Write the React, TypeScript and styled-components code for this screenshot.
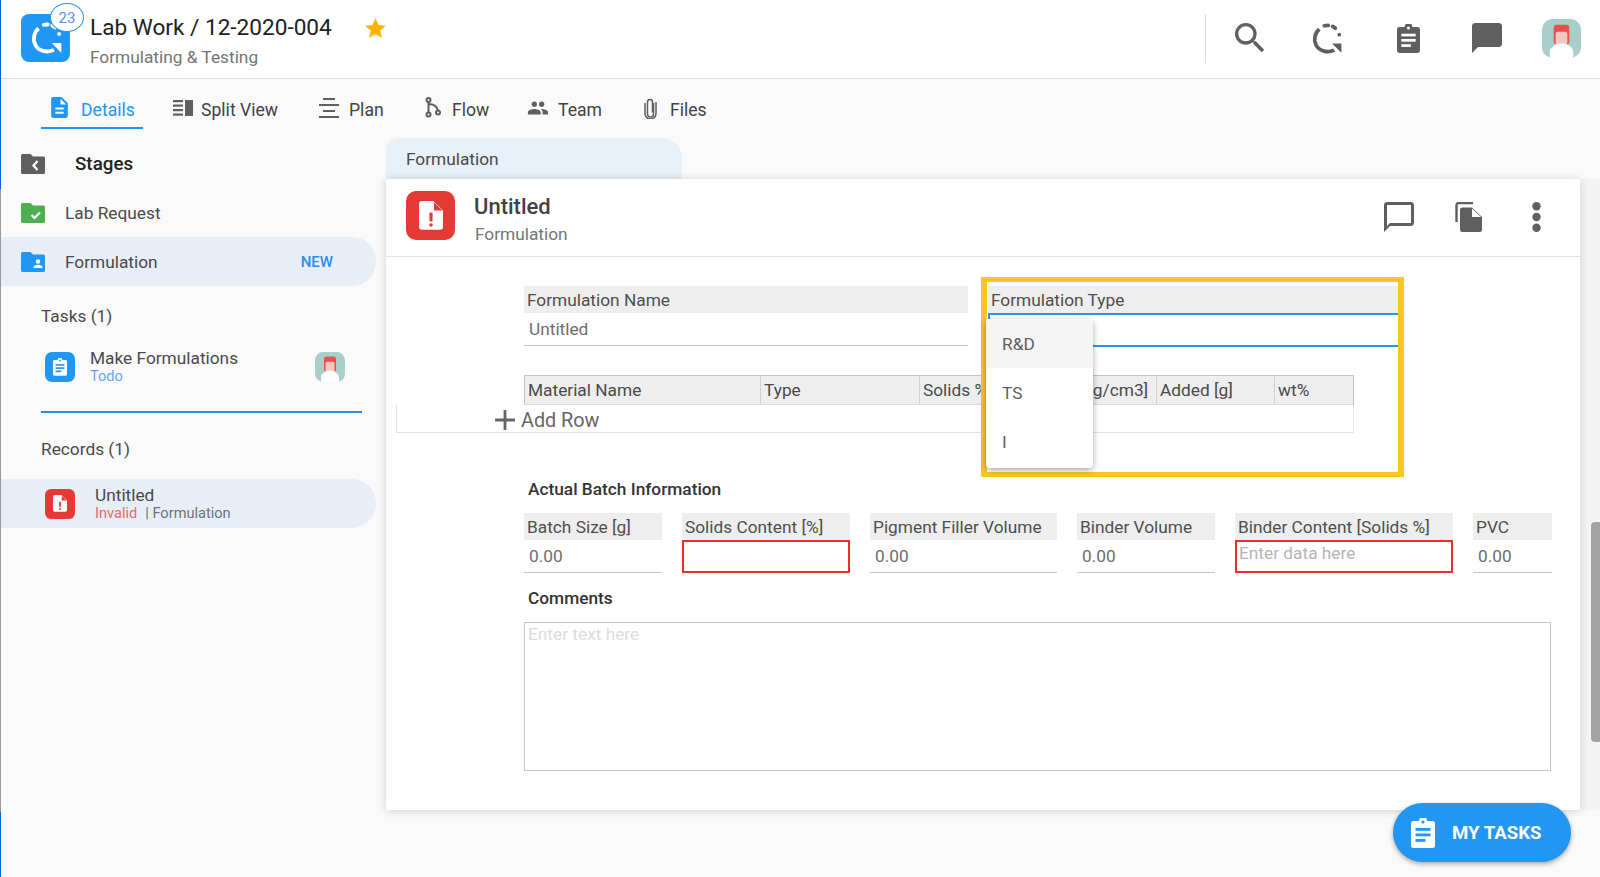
import React from "react";
import styled, { createGlobalStyle } from "styled-components";
import { MdSearch, MdChatBubble, MdChatBubbleOutline, MdPeople, MdDescription, MdStar, MdAdd } from "react-icons/md";

const Global = createGlobalStyle`
  html, body { margin: 0; padding: 0; height: 100%; overflow: hidden; }
  body { font-family: Roboto, "Liberation Sans", sans-serif; background: #fafafa; color: #424242; }
  * { box-sizing: border-box; }
`;

const Page = styled.div`
  position: relative;
  width: 1600px;
  height: 877px;
  overflow: hidden;
  background: #fafafa;
  border-left: 1px solid #999;
  border-image: linear-gradient(to bottom, #0a63d0 0, #0a63d0 190px, #999 190px, #999 811px, #0a63d0 811px) 1;
`;

const TopBar = styled.header`
  height: 79px;
  background: #fff;
  border-bottom: 1px solid #ddd;
  display: flex;
  align-items: center;
  padding: 0 19px 2px 20px;
`;
const LogoBox = styled.div`
  position: relative;
  width: 49px;
  height: 48px;
  border-radius: 8px;
  background: #2196f3;
  display: flex;
  align-items: center;
  justify-content: center;
  flex: none;
`;
const Badge = styled.span`
  position: absolute;
  left: 29px;
  top: -11px;
  width: 34px;
  height: 29px;
  border-radius: 50%;
  background: #fff;
  border: 1px solid #2196f3;
  color: #5b8ff0;
  font-size: 15px;
  display: flex;
  align-items: center;
  justify-content: center;
`;
const TitleBlock = styled.div`
  margin: 6px 0 0 20px;
  width: 273px;
  display: flex;
  flex-direction: column;
  gap: 2px;
`;
const AppTitle = styled.div`
  font-size: 22.6px;
  line-height: 30px;
  color: #212121;
  white-space: nowrap;
`;
const AppSub = styled.div`
  font-size: 17.3px;
  line-height: 24px;
  color: #757575;
`;
const Star = styled.div`
  color: #ffb300;
  display: flex;
  margin-top: -20px;
`;
const Spacer = styled.div`
  flex: 1;
`;
const Divider = styled.div`
  width: 1px;
  height: 49px;
  background: #ddd;
  margin-right: 24px;
`;
const TopIcons = styled.div`
  display: flex;
  align-items: center;
  gap: 39px;
  color: #5f5f5f;
`;
const IconSlot = styled.div`
  width: 40px;
  display: flex;
  justify-content: center;
  align-items: center;
  flex: none;
`;
const LoopSlot = styled(IconSlot)`
  justify-content: flex-start;
  padding-left: 1px;
`;
const AvatarSlot = styled.div`
  margin-left: -4px;
  display: flex;
`;

const TabBar = styled.nav`
  height: 59px;
  display: flex;
  align-items: flex-start;
  padding-left: 40px;
`;
const Tab = styled.div<{ $active?: boolean; $w: number; $pad: number; $gap: number }>`
  width: ${(p) => p.$w}px;
  height: 50px;
  display: flex;
  align-items: center;
  gap: ${(p) => p.$gap}px;
  padding: 14px 0 0 ${(p) => p.$pad}px;
  font-size: 17.6px;
  white-space: nowrap;
  color: ${(p) => (p.$active ? "#2196f3" : "#424242")};
  border-bottom: 2px solid ${(p) => (p.$active ? "#2196f3" : "transparent")};
  svg { color: ${(p) => (p.$active ? "#2196f3" : "#5f5f5f")}; flex: none; margin-top: -5px; }
`;

const Body = styled.div`
  display: flex;
`;
const Sidebar = styled.aside`
  width: 385px;
  flex: none;
  padding-right: 10px;
`;
const StageHead = styled.div`
  height: 50px;
  display: flex;
  align-items: center;
  padding: 1px 0 0 20px;
  gap: 30px;
  font-size: 18.8px;
  font-weight: 500;
  color: #212121;
`;
const StageRow = styled.div<{ $active?: boolean }>`
  height: 49px;
  display: flex;
  align-items: center;
  padding: 0 43px 0 20px;
  gap: 20px;
  font-size: 17.3px;
  color: #4a4a4a;
  background: ${(p) => (p.$active ? "#e8eef6" : "transparent")};
  border-radius: 0 24px 24px 0;
`;
const NewTag = styled.span`
  margin-left: auto;
  font-size: 15px;
  font-weight: 500;
  color: #2f8df0;
`;
const GroupTitle = styled.div<{ $top: number }>`
  margin: ${(p) => p.$top}px 0 0 40px;
  font-size: 17.3px;
  line-height: 24px;
  color: #4a4a4a;
`;
const TaskRow = styled.div`
  display: flex;
  align-items: center;
  margin: 20px 31px 0 44px;
  gap: 15px;
`;
const TwoLines = styled.div`
  flex: 1;
  display: flex;
  flex-direction: column;
`;
const LineMain = styled.div`
  font-size: 17.3px;
  line-height: 20px;
  color: #4a4a4a;
`;
const LineSub = styled.div`
  font-size: 14.6px;
  line-height: 17px;
  color: #6b7280;
`;
const TodoText = styled.span`
  color: #64a6ff;
`;
const InvalidText = styled.span`
  color: #ea6a6a;
  margin-right: 8px;
`;
const BlueRule = styled.div`
  height: 2px;
  margin: 26px 14px 0 40px;
  background: #2d88e8;
`;
const RecordRow = styled.div`
  height: 49px;
  margin-top: 18px;
  display: flex;
  align-items: center;
  padding-left: 44px;
  gap: 20px;
  background: #e8eef6;
  border-radius: 0 24px 24px 0;
`;
const SquareIcon = styled.div<{ $bg: string; $size: number; $r: number }>`
  width: ${(p) => p.$size}px;
  height: ${(p) => p.$size}px;
  border-radius: ${(p) => p.$r}px;
  background: ${(p) => p.$bg};
  display: flex;
  align-items: center;
  justify-content: center;
  flex: none;
`;

const Main = styled.main`
  width: 1194px;
  flex: none;
`;
const SheetTab = styled.div`
  width: 296px;
  height: 41px;
  padding: 0 20px;
  display: flex;
  align-items: center;
  background: #e8f0f8;
  border-radius: 12px 20px 0 0;
  font-size: 17.3px;
  color: #4a4a4a;
`;
const Card = styled.section`
  height: 631px;
  background: #fff;
  border-radius: 2px;
  box-shadow: 0 1px 10px rgba(0, 0, 0, 0.18);
  position: relative;
  z-index: 1;
`;
const CardHead = styled.div`
  height: 78px;
  border-bottom: 1px solid #e2e2e2;
  display: flex;
  align-items: center;
  padding: 0 37px 4px 20px;
  color: #5f5f5f;
`;
const CardTitles = styled.div`
  margin: 6px 0 0 19px;
  flex: 1;
  display: flex;
  flex-direction: column;
`;
const CardTitle = styled.div`
  font-size: 22px;
  line-height: 30px;
  font-weight: 500;
  color: #424242;
`;
const CardSub = styled.div`
  font-size: 17.3px;
  line-height: 24px;
  color: #757575;
  margin-left: 1px;
`;
const CardTools = styled.div`
  display: flex;
  align-items: center;
  gap: 38px;
  margin-top: 3px;
`;
const DotsSlot = styled.div`
  margin-left: 10px;
  display: flex;
`;

const Form = styled.div`
  position: relative;
  padding: 29px 29px 0 138px;
`;
const FieldRow = styled.div<{ $gap: number; $top: number }>`
  display: flex;
  gap: ${(p) => p.$gap}px;
  margin-top: ${(p) => p.$top}px;
`;
const Field = styled.div<{ $w: number }>`
  position: relative;
  width: ${(p) => p.$w}px;
  flex: none;
`;
const FieldLabel = styled.div`
  height: 27px;
  background: #eee;
  padding: 0 3px;
  display: flex;
  align-items: center;
  font-size: 17.3px;
  color: #4f4f4f;
  white-space: nowrap;
`;
const FieldValue = styled.div<{ $state?: "error" | "focus" }>`
  height: 33px;
  padding: 0 5px;
  display: flex;
  align-items: center;
  font-size: 17.3px;
  color: #6e6e6e;
  border-bottom: 1px solid #c6c6c6;
  ${(p) => p.$state === "error" && `border: 2px solid #f02b2b; align-items: flex-start; padding: 1px 2px; color: #b5b5b5;`}
  ${(p) => p.$state === "focus" && `border: 2px solid #2196f3; border-right: 0; height: 34px;`}
`;
const Highlight = styled.div`
  position: absolute;
  left: 595px;
  top: 20px;
  width: 423px;
  height: 200px;
  border: 5px solid #fcc425;
  border-left-width: 6px;
  border-right-width: 6px;
  pointer-events: none;
`;
const Menu = styled.div`
  position: absolute;
  left: -2px;
  top: 33px;
  width: 107px;
  padding-bottom: 2px;
  background: #fff;
  border-radius: 4px;
  box-shadow: 0 2px 6px rgba(0, 0, 0, 0.35);
  z-index: 2;
`;
const MenuItem = styled.div<{ $hover?: boolean }>`
  height: 49px;
  padding-left: 16px;
  display: flex;
  align-items: center;
  font-size: 17.3px;
  color: #5f5f5f;
  background: ${(p) => (p.$hover ? "#f5f5f5" : "transparent")};
`;
const TableHead = styled.div`
  display: flex;
  margin-top: 28px;
  width: 830px;
  border: 1px solid #c4c4c4;
  border-bottom: 1px solid #d8d8d8;
  background: #eee;
`;
const HeadCell = styled.div<{ $w: number }>`
  width: ${(p) => p.$w}px;
  height: 28px;
  flex: none;
  padding: 0 3px;
  display: flex;
  align-items: center;
  font-size: 17.3px;
  color: #4a4a4a;
  white-space: nowrap;
  overflow: hidden;
  border-right: 1px solid #d0d0d0;
  &:last-child { border-right: 0; }
`;
const AddRow = styled.div`
  margin-left: -128px;
  width: 958px;
  height: 28px;
  border: 1px solid #e2e2e2;
  border-top: 0;
  padding: 3px 0 0 91px;
  display: flex;
  align-items: center;
  font-size: 19.8px;
  color: #666;
  svg { flex: none; margin-right: -1px; }
`;
const SectionTitle = styled.div<{ $top: number }>`
  margin: ${(p) => p.$top}px 0 0 4px;
  font-size: 17.3px;
  line-height: 20px;
  font-weight: 500;
  color: #333;
`;
const NoteBox = styled.div`
  margin-top: 14px;
  width: 1027px;
  height: 149px;
  border: 1px solid #c6c6c6;
  padding: 1px 3px;
  font-size: 17.3px;
  color: #dcdcdc;
`;
const Thumb = styled.div`
  position: absolute;
  right: 0;
  top: 522px;
  width: 9px;
  height: 220px;
  border-radius: 4px 0 0 4px;
  background: #a3a3a3;
`;
const Track = styled.div`
  position: absolute;
  right: 0;
  top: 179px;
  height: 631px;
  width: 19px;
  background: #f4f4f4;
`;
const Fab = styled.button`
  position: absolute;
  left: 1392px;
  top: 803px;
  width: 178px;
  height: 59px;
  border: 0;
  border-radius: 30px;
  background: #2196f3;
  color: #fff;
  font-family: inherit;
  font-size: 18.6px;
  font-weight: 700;
  display: flex;
  align-items: center;
  gap: 17px;
  padding: 0 0 0 18px;
  z-index: 3;
  box-shadow: 0 2px 5px rgba(0, 0, 0, 0.35);
`;

const LoopIcon = ({ size, color }: { size: number; color: string }) => (
  <svg width={size} height={size} viewBox="0 0 30 30" fill="none" stroke={color} strokeWidth="3.4">
    <path d="M8.5 6.5A12 12 0 0 0 5.5 21C8.5 26.5 16 28.5 22 25.5" />
    <path d="M13 3.4l3.6-.3M20.6 4l2.4 1.6" strokeLinecap="round" />
    <circle cx="26.6" cy="11.5" r="1.7" fill={color} stroke="none" />
    <path d="M20 19.5h8.5V28z" fill={color} stroke="none" />
  </svg>
);

const ClipboardIcon = ({ w, h, color, bars }: { w: number; h: number; color: string; bars: string }) => (
  <svg width={w} height={h} viewBox="0 0 24 30">
    <path d="M2.5 3H8a4 4 0 0 1 8 0h5.5A2.5 2.5 0 0 1 24 5.5v22a2.5 2.5 0 0 1-2.5 2.5h-19A2.5 2.5 0 0 1 0 27.5v-22A2.5 2.5 0 0 1 2.5 3z" fill={color} />
    <circle cx="12" cy="4" r="1.6" fill={bars} />
    <rect x="4.5" y="10" width="15" height="2.8" fill={bars} />
    <rect x="4.5" y="15.5" width="15" height="2.8" fill={bars} />
    <rect x="4.5" y="21" width="10" height="2.8" fill={bars} />
  </svg>
);

const FolderBase = ({ color, children }: { color: string; children: React.ReactNode }) => (
  <svg width="24" height="20" viewBox="0 0 24 20" fill={color}>
    <path d="M1.5 0h8l2.5 2.5h10.5A1.5 1.5 0 0 1 24 4v14.5a1.5 1.5 0 0 1-1.5 1.5h-21A1.5 1.5 0 0 1 0 18.5v-17A1.5 1.5 0 0 1 1.5 0z" />
    {children}
  </svg>
);

const FileAlert = ({ size, color }: { size: number; color: string }) => (
  <svg width={size} height={size * 1.2} viewBox="0 0 20 24">
    <path d="M2.5 0H12l8 8v13.5A2.5 2.5 0 0 1 17.5 24h-15A2.5 2.5 0 0 1 0 21.5v-19A2.5 2.5 0 0 1 2.5 0z" fill="#fff" />
    <path d="M12.5 1v7h7z" fill={color} />
    <rect x="8.7" y="9.5" width="2.6" height="7.5" rx="1" fill={color} />
    <circle cx="10" cy="20" r="1.5" fill={color} />
  </svg>
);

const Avatar = ({ size, id }: { size: number; id: string }) => (
  <svg width={size} height={size} viewBox="0 0 40 40">
    <defs>
      <clipPath id={id}>
        <rect width="40" height="40" rx="11" />
      </clipPath>
    </defs>
    <g clipPath={`url(#${id})`}>
      <rect width="40" height="40" fill="#a9cfcb" />
      <rect x="12" y="6" width="16" height="20" rx="3" fill="#e9504c" />
      <rect x="14" y="13" width="12" height="13" rx="2" fill="#f3c6c0" />
      <path d="M8 40v-7c0-4 5-6 8-8h8c3 2 8 4 8 8v7z" fill="#fff" />
    </g>
  </svg>
);

const SplitIcon = () => (
  <svg width="20" height="16" viewBox="0 0 20 16" fill="#5f5f5f">
    <rect x="0" y="0" width="10" height="2.2" />
    <rect x="0" y="4.5" width="10" height="2.2" />
    <rect x="0" y="9" width="10" height="2.2" />
    <rect x="0" y="13.5" width="10" height="2.2" />
    <rect x="12" y="0" width="8" height="16" />
  </svg>
);
const PlanIcon = () => (
  <svg width="20" height="20" viewBox="0 0 20 20" fill="#5f5f5f">
    <rect x="4" y="0" width="12" height="2" />
    <rect x="0" y="6" width="20" height="2" />
    <rect x="4" y="12" width="12" height="2" />
    <rect x="0" y="18" width="20" height="2" />
  </svg>
);
const FlowIcon = () => (
  <svg width="16" height="21" viewBox="0 0 16 21" fill="none" stroke="#5f5f5f" strokeWidth="2">
    <circle cx="3.5" cy="3" r="2" />
    <circle cx="3.5" cy="17.5" r="2" />
    <circle cx="13" cy="15.5" r="2" />
    <path d="M3.5 5v10.5M3.5 7c4 0 8 1 9.5 6.5" />
  </svg>
);
const ClipIcon = () => (
  <svg width="13" height="22" viewBox="0 0 13 22" fill="none" stroke="#5f5f5f" strokeWidth="1.5">
    <path d="M9.5 5v11a3 3 0 0 1-6 0V4a2.5 2.5 0 0 1 5 0v10.5" transform="translate(0 1)" />
    <path d="M1 6v10.5a5.5 5.5 0 0 0 11 0V5" />
  </svg>
);
const CopyIcon = () => (
  <svg width="27" height="30" viewBox="0 0 27 30" fill="#5f5f5f">
    <path d="M1.5 20V3a2 2 0 0 1 2-2h14.5" fill="none" stroke="#5f5f5f" strokeWidth="2.4" />
    <path d="M7.5 5.5H17L27 15v12.5a2.5 2.5 0 0 1-2.5 2.5h-17A2.5 2.5 0 0 1 5 27.5V8a2.5 2.5 0 0 1 2.5-2.5z" />
    <path d="M17 6.5V15h9z" fill="#fff" />
  </svg>
);
const DotsIcon = () => (
  <svg width="13" height="30" viewBox="0 0 13 30" fill="#5f5f5f">
    <circle cx="6.5" cy="4.3" r="4.2" />
    <circle cx="6.5" cy="15" r="4.2" />
    <circle cx="6.5" cy="25.7" r="4.2" />
  </svg>
);

const batch: { label: string; w: number; value?: string; state?: "error"; placeholder?: string }[] = [
  { label: "Batch Size [g]", w: 138, value: "0.00" },
  { label: "Solids Content [%]", w: 168, state: "error" },
  { label: "Pigment Filler Volume", w: 187, value: "0.00" },
  { label: "Binder Volume", w: 138, value: "0.00" },
  { label: "Binder Content [Solids %]", w: 218, state: "error", placeholder: "Enter data here" },
  { label: "PVC", w: 79, value: "0.00" },
];

const columns = [
  { label: "Material Name", w: 236 },
  { label: "Type", w: 159 },
  { label: "Solids %", w: 104 },
  { label: "Density [g/cm3]", w: 133 },
  { label: "Added [g]", w: 118 },
  { label: "wt%", w: 78 },
];

export default function App() {
  return (
    <>
      <Global />
      <Page>
        <TopBar>
          <LogoBox>
            <LoopIcon size={34} color="#fff" />
            <Badge>23</Badge>
          </LogoBox>
          <TitleBlock>
            <AppTitle>Lab Work / 12-2020-004</AppTitle>
            <AppSub>Formulating &amp; Testing</AppSub>
          </TitleBlock>
          <Star>
            <MdStar size={25} />
          </Star>
          <Spacer />
          <Divider />
          <TopIcons>
            <IconSlot><MdSearch size={40} /></IconSlot>
            <LoopSlot><LoopIcon size={33} color="#5f5f5f" /></LoopSlot>
            <IconSlot><ClipboardIcon w={23} h={29} color="#5f5f5f" bars="#fff" /></IconSlot>
            <IconSlot><MdChatBubble size={36} /></IconSlot>
            <AvatarSlot><Avatar size={39} id="avatarTop" /></AvatarSlot>
          </TopIcons>
        </TopBar>
        <TabBar>
          <Tab $active $w={102} $pad={6} $gap={9}><MdDescription size={25} />Details</Tab>
          <Tab $w={136} $pad={30} $gap={8}><SplitIcon />Split View</Tab>
          <Tab $w={110} $pad={40} $gap={10}><PlanIcon />Plan</Tab>
          <Tab $w={100} $pad={36} $gap={11}><FlowIcon />Flow</Tab>
          <Tab $w={112} $pad={38} $gap={9}><MdPeople size={22} />Team</Tab>
          <Tab $w={100} $pad={43} $gap={13}><ClipIcon />Files</Tab>
        </TabBar>
        <Body>
          <Sidebar>
            <StageHead>
              <FolderBase color="#5f5f5f">
                <path d="M16.5 7l-4 4.5 4 4.5" fill="none" stroke="#fff" strokeWidth="2.4" />
              </FolderBase>
              Stages
            </StageHead>
            <StageRow>
              <FolderBase color="#4caf50">
                <path d="M10.5 12l3 3 5.5-5.5" fill="none" stroke="#fff" strokeWidth="2.2" />
              </FolderBase>
              Lab Request
            </StageRow>
            <StageRow $active>
              <FolderBase color="#2196f3">
                <circle cx="17" cy="9.5" r="2.2" fill="#fff" />
                <path d="M12.5 16c0-2.5 2.5-3.2 4.5-3.2s4.5.7 4.5 3.2z" fill="#fff" />
              </FolderBase>
              Formulation
              <NewTag>NEW</NewTag>
            </StageRow>
            <GroupTitle $top={18}>Tasks (1)</GroupTitle>
            <TaskRow>
              <SquareIcon $bg="#2196f3" $size={30} $r={7}>
                <ClipboardIcon w={14} h={18} color="#fff" bars="#2196f3" />
              </SquareIcon>
              <TwoLines>
                <LineMain>Make Formulations</LineMain>
                <LineSub><TodoText>Todo</TodoText></LineSub>
              </TwoLines>
              <Avatar size={30} id="avatarTask" />
            </TaskRow>
            <BlueRule />
            <GroupTitle $top={24}>Records (1)</GroupTitle>
            <RecordRow>
              <SquareIcon $bg="#e53935" $size={30} $r={6}>
                <FileAlert size={14} color="#e53935" />
              </SquareIcon>
              <TwoLines>
                <LineMain>Untitled</LineMain>
                <LineSub><InvalidText>Invalid</InvalidText>| Formulation</LineSub>
              </TwoLines>
            </RecordRow>
          </Sidebar>
          <Main>
            <SheetTab>Formulation</SheetTab>
            <Card>
              <CardHead>
                <SquareIcon $bg="#e53935" $size={49} $r={10}>
                  <FileAlert size={24} color="#e53935" />
                </SquareIcon>
                <CardTitles>
                  <CardTitle>Untitled</CardTitle>
                  <CardSub>Formulation</CardSub>
                </CardTitles>
                <CardTools>
                  <MdChatBubbleOutline size={36} />
                  <CopyIcon />
                  <DotsSlot><DotsIcon /></DotsSlot>
                </CardTools>
              </CardHead>
              <Form>
                <FieldRow $gap={20} $top={0}>
                  <Field $w={444}>
                    <FieldLabel>Formulation Name</FieldLabel>
                    <FieldValue>Untitled</FieldValue>
                  </Field>
                  <Field $w={411}>
                    <FieldLabel>Formulation Type</FieldLabel>
                    <FieldValue $state="focus" />
                    <Menu>
                      <MenuItem $hover>R&amp;D</MenuItem>
                      <MenuItem>TS</MenuItem>
                      <MenuItem>I</MenuItem>
                    </Menu>
                  </Field>
                </FieldRow>
                <TableHead>
                  {columns.map((c) => (
                    <HeadCell key={c.label} $w={c.w}>{c.label}</HeadCell>
                  ))}
                </TableHead>
                <AddRow>
                  <MdAdd size={34} />
                  Add Row
                </AddRow>
                <SectionTitle $top={46}>Actual Batch Information</SectionTitle>
                <FieldRow $gap={20} $top={14}>
                  {batch.map((f) => (
                    <Field key={f.label} $w={f.w}>
                      <FieldLabel>{f.label}</FieldLabel>
                      <FieldValue $state={f.state}>{f.value ?? f.placeholder}</FieldValue>
                    </Field>
                  ))}
                </FieldRow>
                <SectionTitle $top={15}>Comments</SectionTitle>
                <NoteBox>Enter text here</NoteBox>
                <Highlight />
              </Form>
            </Card>
          </Main>
        </Body>
        <Track />
        <Thumb />
        <Fab>
          <ClipboardIcon w={24} h={30} color="#fff" bars="#2196f3" />
          MY TASKS
        </Fab>
      </Page>
    </>
  );
}
